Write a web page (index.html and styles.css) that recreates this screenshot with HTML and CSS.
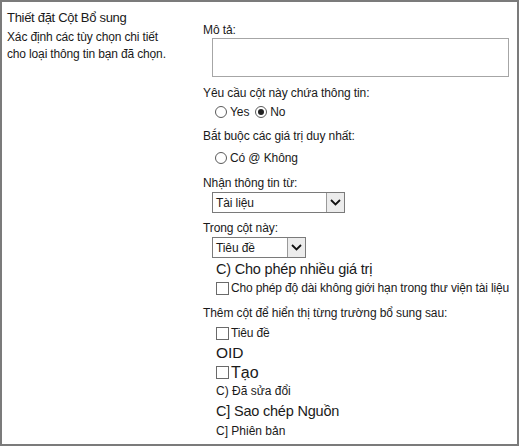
FILE: index.html
```html
<!DOCTYPE html>
<html lang="vi">
<head>
<meta charset="utf-8">
<link rel="stylesheet" href="styles.css">
</head>
<body>
<div class="frame">
  <div class="side">
    <div class="side-title">Thiết đặt Cột Bổ sung</div>
    <div class="side-desc">Xác định các tùy chọn chi tiết<br>cho loại thông tin bạn đã chọn.</div>
  </div>
  <div class="main">
    <div class="label l-desc">Mô tả:</div>
    <div class="textarea"></div>

    <div class="label l-req">Yêu cầu cột này chứa thông tin:</div>
    <div class="opts opts-req">
      <span class="radio"></span><span class="opt-text">Yes</span>
      <span class="radio checked"></span><span class="opt-text">No</span>
    </div>

    <div class="label l-uniq">Bắt buộc các giá trị duy nhất:</div>
    <div class="opts opts-uniq">
      <span class="radio"></span><span class="opt-text">Có @ Không</span>
    </div>

    <div class="label l-from">Nhận thông tin từ:</div>
    <div class="select sel-wide">
      <span class="sel-text">Tài liệu</span>
      <span class="sel-btn"><svg width="13" height="9" viewBox="0 0 13 9"><path d="M2 2 L6.5 6.5 L11 2" fill="none" stroke="#111" stroke-width="1.8"/></svg></span>
    </div>

    <div class="label l-col">Trong cột này:</div>
    <div class="select sel-narrow">
      <span class="sel-text">Tiêu đề</span>
      <span class="sel-btn"><svg width="13" height="9" viewBox="0 0 13 9"><path d="M2 2 L6.5 6.5 L11 2" fill="none" stroke="#111" stroke-width="1.8"/></svg></span>
    </div>

    <div class="big-line multi">C) Cho phép nhiều giá trị</div>
    <div class="check-row unlimited"><span class="checkbox"></span><span class="opt-text tight">Cho phép độ dài không giới hạn trong thư viện tài liệu</span></div>

    <div class="label l-add">Thêm cột để hiển thị từng trường bổ sung sau:</div>
    <div class="fields">
      <div class="check-row f-title"><span class="checkbox"></span><span class="opt-text">Tiêu đề</span></div>
      <div class="big-line f-oid">OID</div>
      <div class="check-row f-created"><span class="checkbox"></span><span class="big-text">Tạo</span></div>
      <div class="small-line f-mod">C) Đã sửa đổi</div>
      <div class="big-line f-copy">C] Sao chép Nguồn</div>
      <div class="small-line f-ver">C] Phiên bản</div>
    </div>
  </div>
</div>
</body>
</html>
```

FILE: styles.css
```css
html, body {
  margin: 0;
  padding: 0;
  background: #ffffff;
}
body {
  font-family: "Liberation Sans", Arial, sans-serif;
  color: #1a1a1a;
}
.frame {
  box-sizing: border-box;
  width: 519px;
  height: 446px;
  border: 2px solid #7b7b7b;
  display: grid;
  grid-template-columns: 201px 1fr;
}
.side {
  padding: 7px 0 0 5px;
}
.side-title {
  font-size: 13px;
  line-height: 17px;
  letter-spacing: -0.3px;
}
.side-desc {
  margin-top: 3px;
  font-size: 12px;
  line-height: 17px;
  letter-spacing: -0.15px;
}
.main {
  padding-top: 20px;
  display: flex;
  flex-direction: column;
  align-items: flex-start;
}
.label {
  font-size: 12px;
  line-height: 16px;
  letter-spacing: -0.1px;
  white-space: nowrap;
}
.textarea {
  box-sizing: border-box;
  width: 297px;
  height: 39px;
  margin: 0 0 0 9px;
  border: 1px solid #a6a6a6;
}
.l-req { margin-top: 8px; }
.opts {
  display: flex;
  align-items: center;
  margin-left: 12px;
  height: 20px;
  font-size: 12px;
  letter-spacing: -0.1px;
}
.opts-req { margin-top: 1px; }
.radio {
  box-sizing: border-box;
  width: 12px;
  height: 12px;
  border: 1px solid #5a5a5a;
  border-radius: 50%;
  margin-right: 3px;
  display: inline-flex;
  align-items: center;
  justify-content: center;
}
.radio.checked::after {
  content: "";
  width: 6px;
  height: 6px;
  border-radius: 50%;
  background: #222;
}
.opt-text {
  margin-right: 6px;
}
.l-uniq { margin-top: 6px; }
.opts-uniq { margin-top: 4px; }
.l-from { margin-top: 7px; }
.select {
  box-sizing: border-box;
  height: 21px;
  border: 1px solid #7a7a7a;
  display: flex;
  align-items: center;
  justify-content: space-between;
  font-size: 12px;
  letter-spacing: -0.1px;
  margin-left: 9px;
}
.sel-wide { width: 133px; margin-top: 1px; }
.sel-narrow { width: 94px; margin-top: 1px; }
.sel-text {
  padding-left: 3px;
}
.sel-btn {
  box-sizing: border-box;
  width: 18px;
  height: 19px;
  border-left: 1px solid #9a9a9a;
  background: #ececec;
  display: flex;
  align-items: center;
  justify-content: center;
}
.l-col { margin-top: 7px; }
.big-line {
  font-size: 14.5px;
  line-height: 20px;
  letter-spacing: -0.2px;
  margin-left: 13px;
  white-space: nowrap;
}
.multi { margin-top: 1px; }
.check-row {
  display: flex;
  align-items: center;
  margin-left: 13px;
  font-size: 12px;
  line-height: 18px;
  letter-spacing: -0.15px;
  white-space: nowrap;
}
.checkbox {
  box-sizing: border-box;
  width: 13px;
  height: 13px;
  border: 1px solid #6a6a6a;
  margin-right: 2px;
  flex: none;
}
.opt-text.tight { margin-right: 0; }
.l-add { margin-top: 8px; }
.fields {
  display: flex;
  flex-direction: column;
  align-items: flex-start;
}
.f-title { margin-top: 2px; height: 20px; }
.f-oid { margin-top: 0; font-size: 15.5px; letter-spacing: 0; }
.f-created { height: 19px; }
.big-text {
  font-size: 16px;
  letter-spacing: 0;
}
.small-line {
  font-size: 12px;
  line-height: 19px;
  margin-left: 13px;
  white-space: nowrap;
}
.f-mod { margin-top: 0; }
.f-copy { margin-top: 0; }
.f-ver { margin-top: 1px; }
```
